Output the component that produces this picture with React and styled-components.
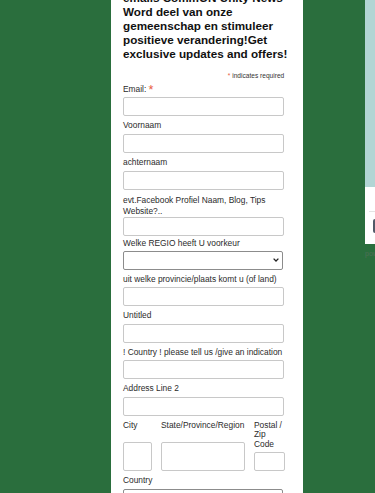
import React from 'react';
import styled, { createGlobalStyle } from 'styled-components';

const Global = createGlobalStyle`
  html, body { margin: 0; padding: 0; }
  body {
    background: #2a6e3d;
    overflow: hidden;
    font-family: "Liberation Sans", Arial, sans-serif;
  }
`;

const Page = styled.div`
  display: flex;
  align-items: stretch;
  width: 375px;
  height: 493px;
  overflow: hidden;
  padding-left: 111px;
  box-sizing: border-box;
  background: #2a6e3d;
`;

const Card = styled.div`
  flex: 0 0 192px;
  width: 192px;
  min-width: 0;
  background: #fff;
  padding: 0 12px;
  box-sizing: border-box;
  color: #333;
`;

const Heading = styled.h2`
  margin: -9.1px 0 0;
  font-size: 11.7px;
  line-height: 13.9px;
  font-weight: bold;
  color: #111;
  white-space: nowrap;
`;

const Required = styled.div`
  width: 96%;
  text-align: right;
  font-size: 6.6px;
  line-height: 9.4px;
  margin: 11px 0 3.9px;
  color: #333;
`;

const Asterisk = styled.span`
  color: #e85c41;
  font-size: ${(p) => (p.$small ? '100%' : '150%')};
  line-height: 0;
  position: relative;
  top: ${(p) => (p.$small ? '0' : '2px')};
`;

const Field = styled.div`
  width: 96%;
  margin-bottom: ${(p) => p.$mb ?? 5}px;
`;

const Label = styled.label`
  display: block;
  font-size: 8.4px;
  line-height: ${(p) => p.$lh ?? 9.4}px;
  color: #2b2b2b;
  margin-bottom: ${(p) => p.$mb ?? 3.2}px;
  white-space: ${(p) => (p.$nowrap ? 'nowrap' : 'normal')};
`;

const Input = styled.input`
  display: block;
  width: 100%;
  height: ${(p) => p.$h ?? 19}px;
  box-sizing: border-box;
  margin: 0;
  padding: 0 4px;
  border: 1px solid #c8c8c8;
  border-radius: 2px;
  background: #fff;
  font: inherit;
  font-size: 8.4px;
`;

const SelectWrap = styled.div`
  position: relative;
  width: 99%;
`;

const Select = styled.select`
  display: block;
  width: 100%;
  height: 18.5px;
  box-sizing: border-box;
  margin: 0;
  padding: 0 4px;
  border: 1px solid #8c8c8c;
  border-radius: 2px;
  background: #fff;
  appearance: none;
  font: inherit;
  font-size: 8.4px;
`;

const Chevron = styled.svg`
  position: absolute;
  right: 4px;
  top: 50%;
  width: 6px;
  height: 4px;
  margin-top: -2px;
  pointer-events: none;
`;

const AddressRow = styled.div`
  display: grid;
  grid-template-columns: 29px 84px 31px;
  column-gap: 9px;
  width: 96%;
  margin-bottom: 5px;
`;

const Cell = styled.div`
  display: flex;
  flex-direction: column;
`;

const CellInput = styled(Input)`
  margin-top: auto;
`;

const Side = styled.div`
  flex: 0 0 120px;
  margin-left: 62px;
  display: flex;
  flex-direction: column;
`;

const BlueBlock = styled.div`
  height: 187px;
  background: #b2d5d4;
`;

const WhiteBox = styled.div`
  height: 57px;
  background: #fff;
  padding: 24px 0 0 4px;
  box-sizing: border-box;
`;

const Divider = styled.div`
  height: 1px;
  background: #e4e4e4;
`;

const SideButton = styled.div`
  width: 40px;
  height: 14px;
  margin: 7px 0 0 4px;
  background: #525a68;
  border-radius: 2px;
`;

const Powered = styled.div`
  margin-top: 5px;
  font-size: 7px;
  line-height: 9px;
  color: #4f6e57;
  white-space: nowrap;
`;

const ChevronIcon = () => (
  <Chevron viewBox="0 0 6 4">
    <path d="M0.6 0.6 L3 3 L5.4 0.6" fill="none" stroke="#222" strokeWidth="1.3" />
  </Chevron>
);

export default function App() {
  return (
    <>
      <Global />
      <Page>
        <Card>
          <Heading>
            emails CommON Unity News
            <br />
            Word deel van onze
            <br />
            gemeenschap en stimuleer
            <br />
            positieve verandering!Get
            <br />
            exclusive updates and offers!
          </Heading>
          <Required>
            <Asterisk $small>*</Asterisk> indicates required
          </Required>

          <Field>
            <Label>
              Email: <Asterisk>*</Asterisk>
            </Label>
            <Input type="email" />
          </Field>
          <Field>
            <Label>Voornaam</Label>
            <Input type="text" />
          </Field>
          <Field>
            <Label>achternaam</Label>
            <Input type="text" />
          </Field>
          <Field $mb={3}>
            <Label $lh={11} $mb={0}>
              evt.Facebook Profiel Naam, Blog, Tips Website?..
            </Label>
            <Input type="text" />
          </Field>
          <Field>
            <Label>Welke REGIO heeft U voorkeur</Label>
            <SelectWrap>
              <Select defaultValue="">
                <option value=""></option>
              </Select>
              <ChevronIcon />
            </SelectWrap>
          </Field>
          <Field>
            <Label $nowrap>uit welke provincie/plaats komt u (of land)</Label>
            <Input type="text" />
          </Field>
          <Field>
            <Label>Untitled</Label>
            <Input type="text" />
          </Field>
          <Field>
            <Label $nowrap>! Country ! please tell us /give an indication</Label>
            <Input type="text" />
          </Field>
          <Field>
            <Label>Address Line 2</Label>
            <Input type="text" />
          </Field>
          <AddressRow>
            <Cell>
              <Label>City</Label>
              <CellInput type="text" $h={29} />
            </Cell>
            <Cell>
              <Label $nowrap>State/Province/Region</Label>
              <CellInput type="text" $h={29} />
            </Cell>
            <Cell>
              <Label>Postal / Zip Code</Label>
              <CellInput type="text" />
            </Cell>
          </AddressRow>
          <Field>
            <Label>Country</Label>
            <SelectWrap>
              <Select defaultValue="">
                <option value=""></option>
              </Select>
              <ChevronIcon />
            </SelectWrap>
          </Field>
        </Card>
        <Side>
          <BlueBlock />
          <WhiteBox>
            <Divider />
            <SideButton />
          </WhiteBox>
          <Powered>powered by</Powered>
        </Side>
      </Page>
    </>
  );
}
